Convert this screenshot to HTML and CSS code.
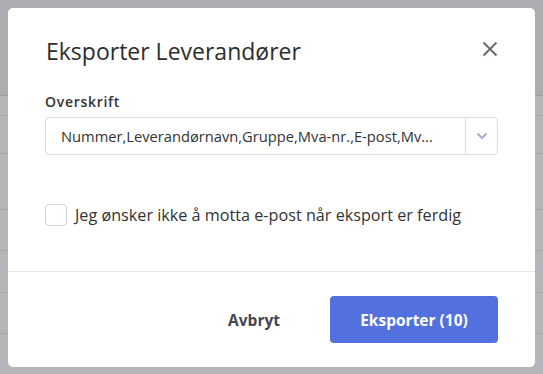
FILE: index.html
```html
<!DOCTYPE html>
<html lang="no">
<head>
    <meta charset="UTF-8">
    <title>Eksporter Leverandører</title>
    <link rel="stylesheet" href="styles.css">
</head>
<body>
    <div class="backdrop">
        <div class="bg-head"></div>
        <div class="bg-row r19"></div>
        <div class="bg-row r37"></div>
        <div class="bg-row r55"></div>
        <div class="bg-row r40"></div>
        <div class="bg-row r41"></div>
        <div class="bg-row r40"></div>
    </div>

    <div class="modal">
        <div class="modal-header">
            <h2 class="modal-title">Eksporter Leverandører</h2>
            <button class="close-btn" aria-label="Lukk">
                <svg width="16" height="16" viewBox="0 0 16 16">
                    <path d="M1.5 1.5L14.5 14.5M14.5 1.5L1.5 14.5" stroke="#6b6b6b" stroke-width="2" fill="none"/>
                </svg>
            </button>
        </div>

        <div class="modal-body">
            <label class="field-label">Overskrift</label>
            <div class="select">
                <div class="select-value">Nummer,Leverandørnavn,Gruppe,Mva-nr.,E-post,Mv...</div>
                <div class="select-arrow">
                    <svg width="12" height="8" viewBox="0 0 12 8">
                        <path d="M1.5 1.5L6 6L10.5 1.5" stroke="#a8b0c8" stroke-width="2" fill="none"/>
                    </svg>
                </div>
            </div>

            <label class="check-row">
                <span class="checkbox"></span>
                Jeg ønsker ikke å motta e-post når eksport er ferdig
            </label>
        </div>

        <div class="modal-footer">
            <button class="btn-link">Avbryt</button>
            <button class="btn-primary">Eksporter (10)</button>
        </div>
    </div>
</body>
</html>
```

FILE: styles.css
```css
body {
    margin: 0;
    padding: 0;
    font-family: "Open Sans", "Noto Sans", Arial, sans-serif;
    background: #b4b5b9;
    color: #333;
    overflow: hidden;
    width: 543px;
    height: 374px;
    position: relative;
}

/* Tabellen bak dialogen */
.backdrop {
    display: flex;
    flex-direction: column;
}

.bg-head {
    height: 95px;
    background: #acadb1;
    border-bottom: 1px solid #9c9da2;
}

.bg-row {
    border-bottom: 1px solid #a4a5aa;
}

.r19 { height: 19px; }
.r37 { height: 37px; }
.r55 { height: 55px; }
.r40 { height: 40px; }
.r41 { height: 41px; }

/* Dialog */
.modal {
    position: absolute;
    top: 8px;
    left: 8px;
    width: 527px;
    height: 359px;
    background: #fff;
    border-radius: 5px;
    display: flex;
    flex-direction: column;
}

.modal-header {
    display: flex;
    align-items: center;
    justify-content: space-between;
    padding: 28px 37px 0 38px;
    height: 30px;
}

.modal-title {
    margin: 0;
    font-size: 23px;
    font-weight: 400;
    line-height: 30px;
    color: #2e2e2e;
}

.close-btn {
    background: none;
    border: none;
    padding: 0;
    margin-top: -4px;
    width: 16px;
    height: 16px;
    cursor: pointer;
    display: flex;
}

.modal-body {
    padding: 26px 37px 0 37px;
    flex: 1;
}

.field-label {
    display: block;
    font-size: 14px;
    line-height: 20px;
    font-weight: 600;
    letter-spacing: 0.7px;
    color: #333;
    margin-bottom: 5px;
}

.select {
    display: flex;
    box-sizing: border-box;
    height: 38px;
    border: 1px solid #dcdde2;
    border-radius: 4px;
}

.select-value {
    flex: 1;
    padding-left: 15px;
    font-size: 14.7px;
    line-height: 36px;
    color: #333;
    white-space: nowrap;
    overflow: hidden;
}

.select-arrow {
    width: 31px;
    border-left: 1px solid #dcdde2;
    display: flex;
    align-items: center;
    justify-content: center;
}

.check-row {
    display: flex;
    align-items: center;
    gap: 8px;
    margin-top: 49px;
    font-size: 16.2px;
    line-height: 22px;
    color: #333;
    cursor: pointer;
}

.checkbox {
    box-sizing: border-box;
    width: 22px;
    height: 22px;
    border: 1px solid #d2d3da;
    border-radius: 4px;
}

.modal-footer {
    display: flex;
    justify-content: flex-end;
    align-items: center;
    gap: 50px;
    padding: 0 37px;
    height: 95px;
    border-top: 1px solid #e4e5ea;
}

.btn-link {
    background: none;
    border: none;
    padding: 0;
    font-family: inherit;
    font-size: 15.5px;
    font-weight: 700;
    color: #45464e;
    cursor: pointer;
}

.btn-primary {
    width: 168px;
    height: 47px;
    background: #5271df;
    border: none;
    border-radius: 4px;
    color: #fff;
    font-family: inherit;
    font-size: 15.5px;
    font-weight: 700;
    cursor: pointer;
}
```
